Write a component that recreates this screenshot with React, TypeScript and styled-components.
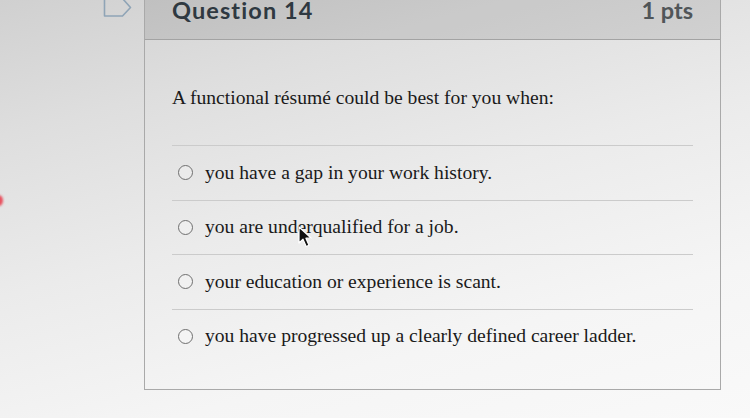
import React from "react";
import styled, { createGlobalStyle } from "styled-components";

const Global = createGlobalStyle`
  html, body { margin: 0; padding: 0; }
  body {
    width: 750px;
    height: 418px;
    overflow: hidden;
    background: linear-gradient(165deg, #d0d0d0 0%, #dedede 22%, #ebebeb 48%, #f5f5f5 75%, #f9f9f9 100%);
  }
`;

const Page = styled.div`
  position: relative;
  width: 750px;
  height: 418px;
  overflow: hidden;
`;

const Layout = styled.div`
  display: flex;
  align-items: flex-start;
  gap: 12px;
  margin-top: -20px;
  padding-left: 103px;
`;

const FlagIcon = styled.svg`
  flex: none;
  margin-top: 17px;
  width: 29px;
  height: 21px;
`;

const Card = styled.section`
  width: 577px;
  border: 1px solid #a9a9a9;
  border-top: none;
  box-sizing: border-box;
`;

const Header = styled.header`
  height: 60px;
  box-sizing: border-box;
  display: flex;
  align-items: flex-end;
  justify-content: space-between;
  padding: 0 27px 15px 27px;
  background: rgba(0, 0, 0, 0.09);
  border-bottom: 1px solid #a3a3a3;
  font-family: Lato, "Open Sans", sans-serif;
  font-weight: 700;
`;

const Title = styled.h2`
  margin: 0;
  font-size: 23.5px;
  letter-spacing: 1.1px;
  font-weight: 700;
  color: #2f3941;
`;

const Points = styled.span`
  font-size: 23.5px;
  color: #515659;
`;

const Body = styled.div`
  padding: 44px 27px 26px 27px;
`;

const Prompt = styled.p`
  margin: 0 0 34px 0;
  font-family: "Liberation Serif", "Times New Roman", serif;
  font-size: 19.6px;
  line-height: 27px;
  color: #1a1a1a;
`;

const Answers = styled.ul`
  list-style: none;
  margin: 0;
  padding: 0;
`;

const Answer = styled.li`
  display: flex;
  align-items: center;
  gap: 12px;
  height: 54.5px;
  box-sizing: border-box;
  border-top: 1px solid #cbcbcb;
  padding-left: 6px;
  font-family: "Liberation Serif", "Times New Roman", serif;
  font-size: 19.6px;
  color: #1a1a1a;
`;

const Radio = styled.span`
  flex: none;
  width: 15px;
  height: 15px;
  border-radius: 50%;
  border: 1.3px solid #6f6f6f;
  box-sizing: border-box;
  background: rgba(255, 255, 255, 0.25);
`;

const RedDot = styled.span`
  position: absolute;
  left: -6px;
  top: 195px;
  width: 9px;
  height: 11px;
  border-radius: 50%;
  background: #e8505e;
  filter: blur(0.8px);
`;

const Cursor = styled.svg`
  position: absolute;
  left: 298px;
  top: 226px;
  width: 16px;
  height: 22px;
`;

const options = [
  "you have a gap in your work history.",
  "you are underqualified for a job.",
  "your education or experience is scant.",
  "you have progressed up a clearly defined career ladder.",
];

export default function App() {
  return (
    <>
      <Global />
      <Page>
        <Layout>
          <FlagIcon viewBox="0 0 29 21">
            <path
              d="M1.5 1.5 H19.5 L27.5 10.5 L19.5 19 H1.5 Z"
              fill="none"
              stroke="#8fa4b6"
              strokeWidth="1.6"
              strokeLinejoin="round"
            />
          </FlagIcon>
          <Card>
            <Header>
              <Title>Question 14</Title>
              <Points>1 pts</Points>
            </Header>
            <Body>
              <Prompt>A functional résumé could be best for you when:</Prompt>
              <Answers>
                {options.map((o) => (
                  <Answer key={o}>
                    <Radio />
                    <span>{o}</span>
                  </Answer>
                ))}
              </Answers>
            </Body>
          </Card>
        </Layout>
        <RedDot />
        <Cursor viewBox="0 0 16 22">
          <path
            d="M1 1 L1 17 L5 13.2 L8.2 20.5 L11 19.3 L7.9 12.2 L13.3 12.2 Z"
            fill="#111"
            stroke="#fff"
            strokeWidth="1.2"
            strokeLinejoin="round"
          />
        </Cursor>
      </Page>
    </>
  );
}
